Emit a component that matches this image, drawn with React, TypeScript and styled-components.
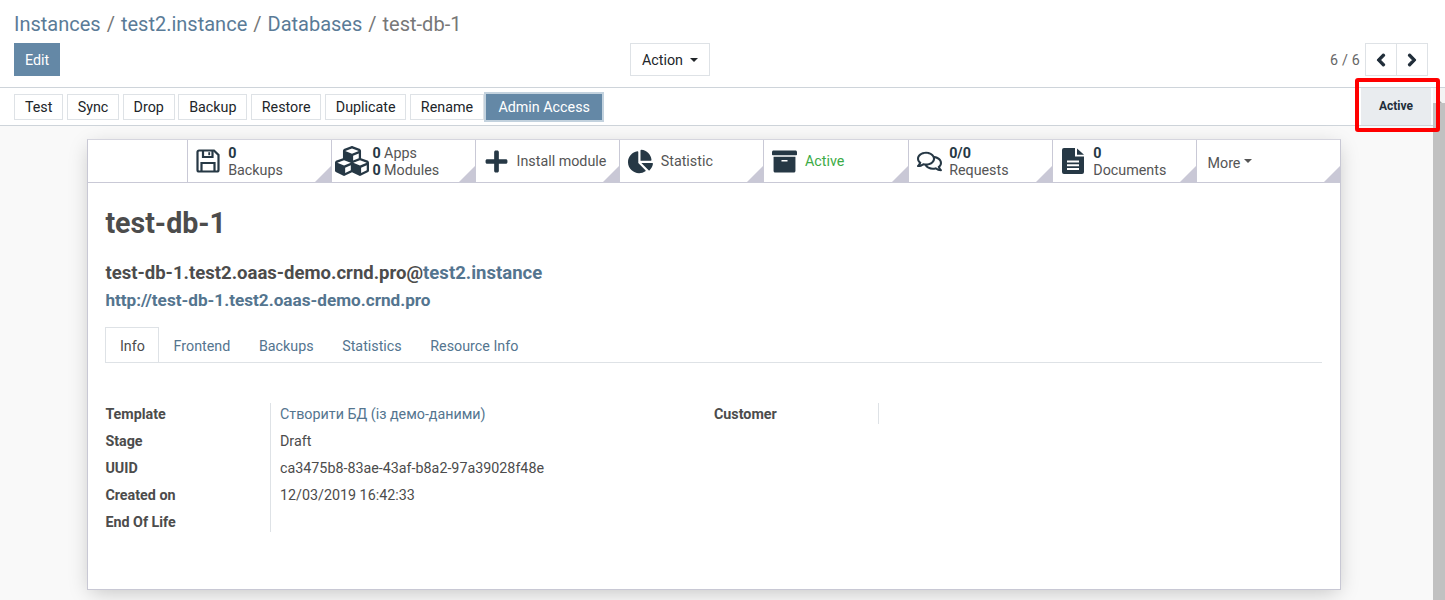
import styled, { createGlobalStyle } from "styled-components";
import { ReactNode } from "react";
import {
  FaCubes,
  FaPlus,
  FaChartPie,
  FaArchive,
  FaRegComments,
  FaChevronLeft,
  FaChevronRight,
} from "react-icons/fa";

const GlobalStyle = createGlobalStyle`
  html, body {
    margin: 0;
    padding: 0;
    height: 600px;
    overflow: hidden;
    background: #fff;
  }
  * { box-sizing: border-box; }
  body {
    font-family: Roboto, "Noto Sans", sans-serif;
    font-size: 14.3px;
    color: #4c4c4c;
  }
`;

const Page = styled.div`
  height: 600px;
  display: flex;
  flex-direction: column;
  position: relative;
  overflow: hidden;
`;

const ControlPanel = styled.header`
  height: 88px;
  flex: none;
  padding: 10px 17px 0 14px;
  background: #fff;
  border-bottom: 1px solid #ced4da;
`;

const Breadcrumb = styled.div`
  font-size: 20px;
  line-height: 29px;
  height: 33px;
  display: flex;
  gap: 6px;
  color: #777;
`;

const Crumb = styled.a`
  color: #5a7b97;
`;

const ControlRow = styled.div`
  display: grid;
  grid-template-columns: 616px auto 1fr;
  align-items: start;
`;

const EditButton = styled.button`
  width: 46px;
  height: 33px;
  border: 0;
  padding: 0;
  background: #6488a6;
  color: #fff;
  font: inherit;
`;

const ActionButton = styled.button`
  width: 80px;
  height: 33px;
  background: #fff;
  border: 1px solid #dee2e6;
  color: #212529;
  font: inherit;
  padding: 0;
  display: flex;
  align-items: center;
  justify-content: center;
  gap: 7px;
`;

const Caret = styled.span`
  display: inline-block;
  border-top: 4px solid currentColor;
  border-left: 4px solid transparent;
  border-right: 4px solid transparent;
`;

const Pager = styled.div`
  display: flex;
  align-items: center;
  justify-content: flex-end;
  height: 33px;
  gap: 6px;
  color: #666;
  letter-spacing: 0.2px;
`;

const PagerGroup = styled.div`
  display: flex;
`;

const PagerButton = styled.button`
  width: 32px;
  height: 33px;
  margin-left: -1px;
  border: 1px solid #dee2e6;
  background: #fff;
  color: #212e3a;
  padding: 0;
  display: flex;
  align-items: center;
  justify-content: center;
  font-size: 14px;
  svg {
    stroke: currentColor;
    stroke-width: 40px;
  }
`;

const Body = styled.div`
  flex: 1;
  min-height: 0;
  display: flex;
`;

const Scroller = styled.div`
  flex: 1;
  min-width: 0;
  background: #f9f9f9;
  overflow: hidden;
`;

const Track = styled.div`
  width: 12px;
  flex: none;
  background: #f4f4f4;
  padding-top: 7px;
  display: flex;
  flex-direction: column;
  align-items: stretch;
`;

const TrackArrow = styled.span`
  align-self: center;
  width: 0;
  height: 8px;
  border-left: 3px solid transparent;
  border-right: 3px solid transparent;
  border-bottom: 3px solid #a3a3a3;
`;

const Thumb = styled.div`
  flex: 1;
  background: #c1c1c1;
`;

const StatusBar = styled.div`
  height: 38px;
  background: #fff;
  border-bottom: 1px solid #ced4da;
  padding: 6px 2px 0 14px;
  display: flex;
  justify-content: space-between;
  margin-bottom: 13px;
`;

const ActionList = styled.div`
  display: flex;
  gap: 3.5px;
`;

const ActionItem = styled.button<{ $primary?: boolean }>`
  height: 26px;
  padding: 0 ${(p) => (p.$primary ? "11px" : "9.9px")};
  margin-left: ${(p) => (p.$primary ? "-1px" : "0")};
  border: 1px solid ${(p) => (p.$primary ? "#6488a6" : "#dee2e6")};
  background: ${(p) => (p.$primary ? "#6488a6" : "#fff")};
  color: ${(p) => (p.$primary ? "#fff" : "#212529")};
  box-shadow: ${(p) => (p.$primary ? "0 0 0 2px #c3d2de" : "none")};
  font: inherit;
  white-space: nowrap;
`;

const StatusActive = styled.div`
  width: 70px;
  height: 37px;
  margin-top: -6px;
  padding-bottom: 2px;
  background: #e9ecef;
  color: #212e3a;
  font-size: 12px;
  font-weight: 700;
  display: flex;
  align-items: center;
  justify-content: center;
`;

const Sheet = styled.main`
  width: 1254px;
  height: 451px;
  margin-left: 87px;
  background: #fff;
  border: 1px solid #c8c8d4;
  border-top-color: #d5d5de;
  box-shadow: 0 5px 20px -3px rgba(0, 0, 0, 0.22);
`;

const ButtonBox = styled.div`
  height: 43px;
  display: flex;
  justify-content: flex-start;
  padding-left: 98.6px;
  border-bottom: 1px solid #c9c9d6;
`;

const BoxButton = styled.div`
  width: 144.2px;
  flex: none;
  height: 42px;
  border-left: 1px solid #c9c9d6;
  position: relative;
  display: flex;
  align-items: center;
  padding-left: 7.6px;
  gap: 7px;
  line-height: 17px;
  &::after {
    content: "";
    position: absolute;
    right: 0;
    bottom: 0;
    border-left: 16px solid transparent;
    border-bottom: 16px solid #c9c8d6;
  }
`;

const BoxIcon = styled.span<{ $size: number }>`
  width: 26px;
  flex: none;
  display: flex;
  justify-content: center;
  color: #263845;
  font-size: ${(p) => p.$size}px;
  svg {
    flex: none;
  }
`;

const BoxText = styled.div<{ $active?: boolean }>`
  padding-top: 1px;
  color: ${(p) => (p.$active ? "#3cab46" : "#555")};
  white-space: nowrap;
`;

const BoxValue = styled.b`
  color: #263845;
  font-weight: 700;
`;

const MoreLabel = styled.div`
  display: flex;
  align-items: center;
  gap: 4px;
  padding-left: 3px;
  padding-top: 4px;
  color: #555;
`;

const MoreCaret = styled(Caret)`
  margin-top: -5px;
`;

const SheetBody = styled.div`
  padding: 23px 18px 0 17.4px;
`;

const Title = styled.h1`
  margin: 0 0 21px;
  font-size: 28.6px;
  line-height: 34px;
  font-weight: 700;
  color: #4c4c4c;
`;

const SubTitle = styled.div`
  font-size: 18.55px;
  line-height: 24px;
  font-weight: 700;
  color: #4c4c4c;
`;

const SubLink = styled.a`
  color: #54758f;
`;

const UrlLine = styled.a`
  display: block;
  margin-top: 3px;
  font-size: 17.16px;
  line-height: 24px;
  font-weight: 700;
  color: #54758f;
`;

const Tabs = styled.nav`
  margin-top: 15px;
  height: 36px;
  display: flex;
  border-bottom: 1px solid #dee2e6;
`;

const Tab = styled.a<{ $active?: boolean }>`
  height: 35px;
  padding: ${(p) => (p.$active ? "0 13.4px 0 13.6px" : "0 13.3px")};
  line-height: 36px;
  color: ${(p) => (p.$active ? "#4c4c4c" : "#54758f")};
  border: 1px solid ${(p) => (p.$active ? "#dee2e6" : "transparent")};
  border-bottom: 0;
`;

const Columns = styled.div`
  margin-top: 40px;
  display: flex;
  align-items: flex-start;
`;

const Group = styled.div<{ $width: number }>`
  width: ${(p) => p.$width}px;
  flex: none;
`;

const Row = styled.div`
  display: flex;
  height: 27px;
  line-height: 22px;
`;

const Label = styled.div<{ $width: number }>`
  width: ${(p) => p.$width}px;
  flex: none;
  height: 27px;
  font-weight: 700;
  color: #4c4c4c;
  border-right: 1px solid #dee2e6;
`;

const LastLabel = styled(Label)`
  height: 21px;
`;

const Value = styled.div`
  padding-left: 9px;
  color: #4c4c4c;
  white-space: nowrap;
`;

const ValueLink = styled(Value)`
  color: #54758f;
`;

const Highlight = styled.div`
  position: absolute;
  left: 1355px;
  top: 78px;
  width: 85px;
  height: 54px;
  border: 4px solid #f00;
  border-radius: 3px;
  pointer-events: none;
`;

const SaveIcon = () => (
  <svg width="24" height="24" viewBox="0 0 24 24" fill="none" stroke="currentColor" strokeWidth="2.2">
    <path d="M3 1.5h15l4.5 4.5v15a1.5 1.5 0 0 1-1.5 1.5H3A1.5 1.5 0 0 1 1.5 21V3A1.5 1.5 0 0 1 3 1.5z" />
    <path d="M7 2v6h9.500V2" />
    <path d="M5.500 22.500V14h13v8.500" />
    <path d="M13.200 3.200v3" strokeWidth="1.800" />
  </svg>
);

const FileIcon = () => (
  <svg width="22" height="26" viewBox="0 0 22 26" fill="currentColor">
    <path
      fillRule="evenodd"
      d="M2 0h11v8.500h9V24a2 2 0 0 1-2 2H2a2 2 0 0 1-2-2V2a2 2 0 0 1 2-2zM5 12.500v2h12v-2zM5 16.200v2h12v-2zM5 19.900v2h12v-2z"
    />
    <path d="M15 .5l7 6.200h-7z" />
  </svg>
);

const StatButton = ({
  icon,
  size,
  children,
  active,
}: {
  icon: ReactNode;
  size: number;
  children: ReactNode;
  active?: boolean;
}) => (
  <BoxButton>
    <BoxIcon $size={size}>{icon}</BoxIcon>
    <BoxText $active={active}>{children}</BoxText>
  </BoxButton>
);

const actions = ["Test", "Sync", "Drop", "Backup", "Restore", "Duplicate", "Rename"];

const rows: [string, string][] = [
  ["Stage", "Draft"],
  ["UUID", "ca3475b8-83ae-43af-b8a2-97a39028f48e"],
  ["Created on", "12/03/2019 16:42:33"],
];

export default function App() {
  return (
    <Page>
      <GlobalStyle />
      <ControlPanel>
        <Breadcrumb>
          <Crumb>Instances</Crumb>
          <span>/</span>
          <Crumb>test2.instance</Crumb>
          <span>/</span>
          <Crumb>Databases</Crumb>
          <span>/</span>
          <span>test-db-1</span>
        </Breadcrumb>
        <ControlRow>
          <div>
            <EditButton>Edit</EditButton>
          </div>
          <ActionButton>
            Action <Caret />
          </ActionButton>
          <Pager>
            6 / 6
            <PagerGroup>
              <PagerButton>
                <FaChevronLeft />
              </PagerButton>
              <PagerButton>
                <FaChevronRight />
              </PagerButton>
            </PagerGroup>
          </Pager>
        </ControlRow>
      </ControlPanel>
      <Body>
        <Scroller>
          <StatusBar>
            <ActionList>
              {actions.map((a) => (
                <ActionItem key={a}>{a}</ActionItem>
              ))}
              <ActionItem $primary>Admin Access</ActionItem>
            </ActionList>
            <StatusActive>Active</StatusActive>
          </StatusBar>
          <Sheet>
            <ButtonBox>
              <StatButton size={24} icon={<SaveIcon />}>
                <BoxValue>0</BoxValue>
                <br />
                Backups
              </StatButton>
              <StatButton size={34} icon={<FaCubes />}>
                <BoxValue>0</BoxValue> Apps
                <br />
                <BoxValue>0</BoxValue> Modules
              </StatButton>
              <StatButton size={25} icon={<FaPlus />}>
                Install module
              </StatButton>
              <StatButton size={25} icon={<FaChartPie />}>
                Statistic
              </StatButton>
              <StatButton size={25} icon={<FaArchive />} active>
                Active
              </StatButton>
              <StatButton size={25} icon={<FaRegComments />}>
                <BoxValue>0/0</BoxValue>
                <br />
                Requests
              </StatButton>
              <StatButton size={26} icon={<FileIcon />}>
                <BoxValue>0</BoxValue>
                <br />
                Documents
              </StatButton>
              <BoxButton>
                <MoreLabel>
                  More <MoreCaret />
                </MoreLabel>
              </BoxButton>
            </ButtonBox>
            <SheetBody>
              <Title>test-db-1</Title>
              <SubTitle>
                test-db-1.test2.oaas-demo.crnd.pro@<SubLink>test2.instance</SubLink>
              </SubTitle>
              <UrlLine>http://test-db-1.test2.oaas-demo.crnd.pro</UrlLine>
              <Tabs>
                <Tab $active>Info</Tab>
                <Tab>Frontend</Tab>
                <Tab>Backups</Tab>
                <Tab>Statistics</Tab>
                <Tab>Resource Info</Tab>
              </Tabs>
              <Columns>
                <Group $width={608.6}>
                  <Row>
                    <Label $width={165.6}>Template</Label>
                    <ValueLink>Створити БД (із демо-даними)</ValueLink>
                  </Row>
                  {rows.map(([k, v]) => (
                    <Row key={k}>
                      <Label $width={165.6}>{k}</Label>
                      <Value>{v}</Value>
                    </Row>
                  ))}
                  <Row>
                    <LastLabel $width={165.6}>End Of Life</LastLabel>
                  </Row>
                </Group>
                <Group $width={400}>
                  <Row>
                    <LastLabel $width={165}>Customer</LastLabel>
                  </Row>
                </Group>
              </Columns>
            </SheetBody>
          </Sheet>
        </Scroller>
        <Track>
          <TrackArrow />
          <Thumb />
        </Track>
      </Body>
      <Highlight />
    </Page>
  );
}
